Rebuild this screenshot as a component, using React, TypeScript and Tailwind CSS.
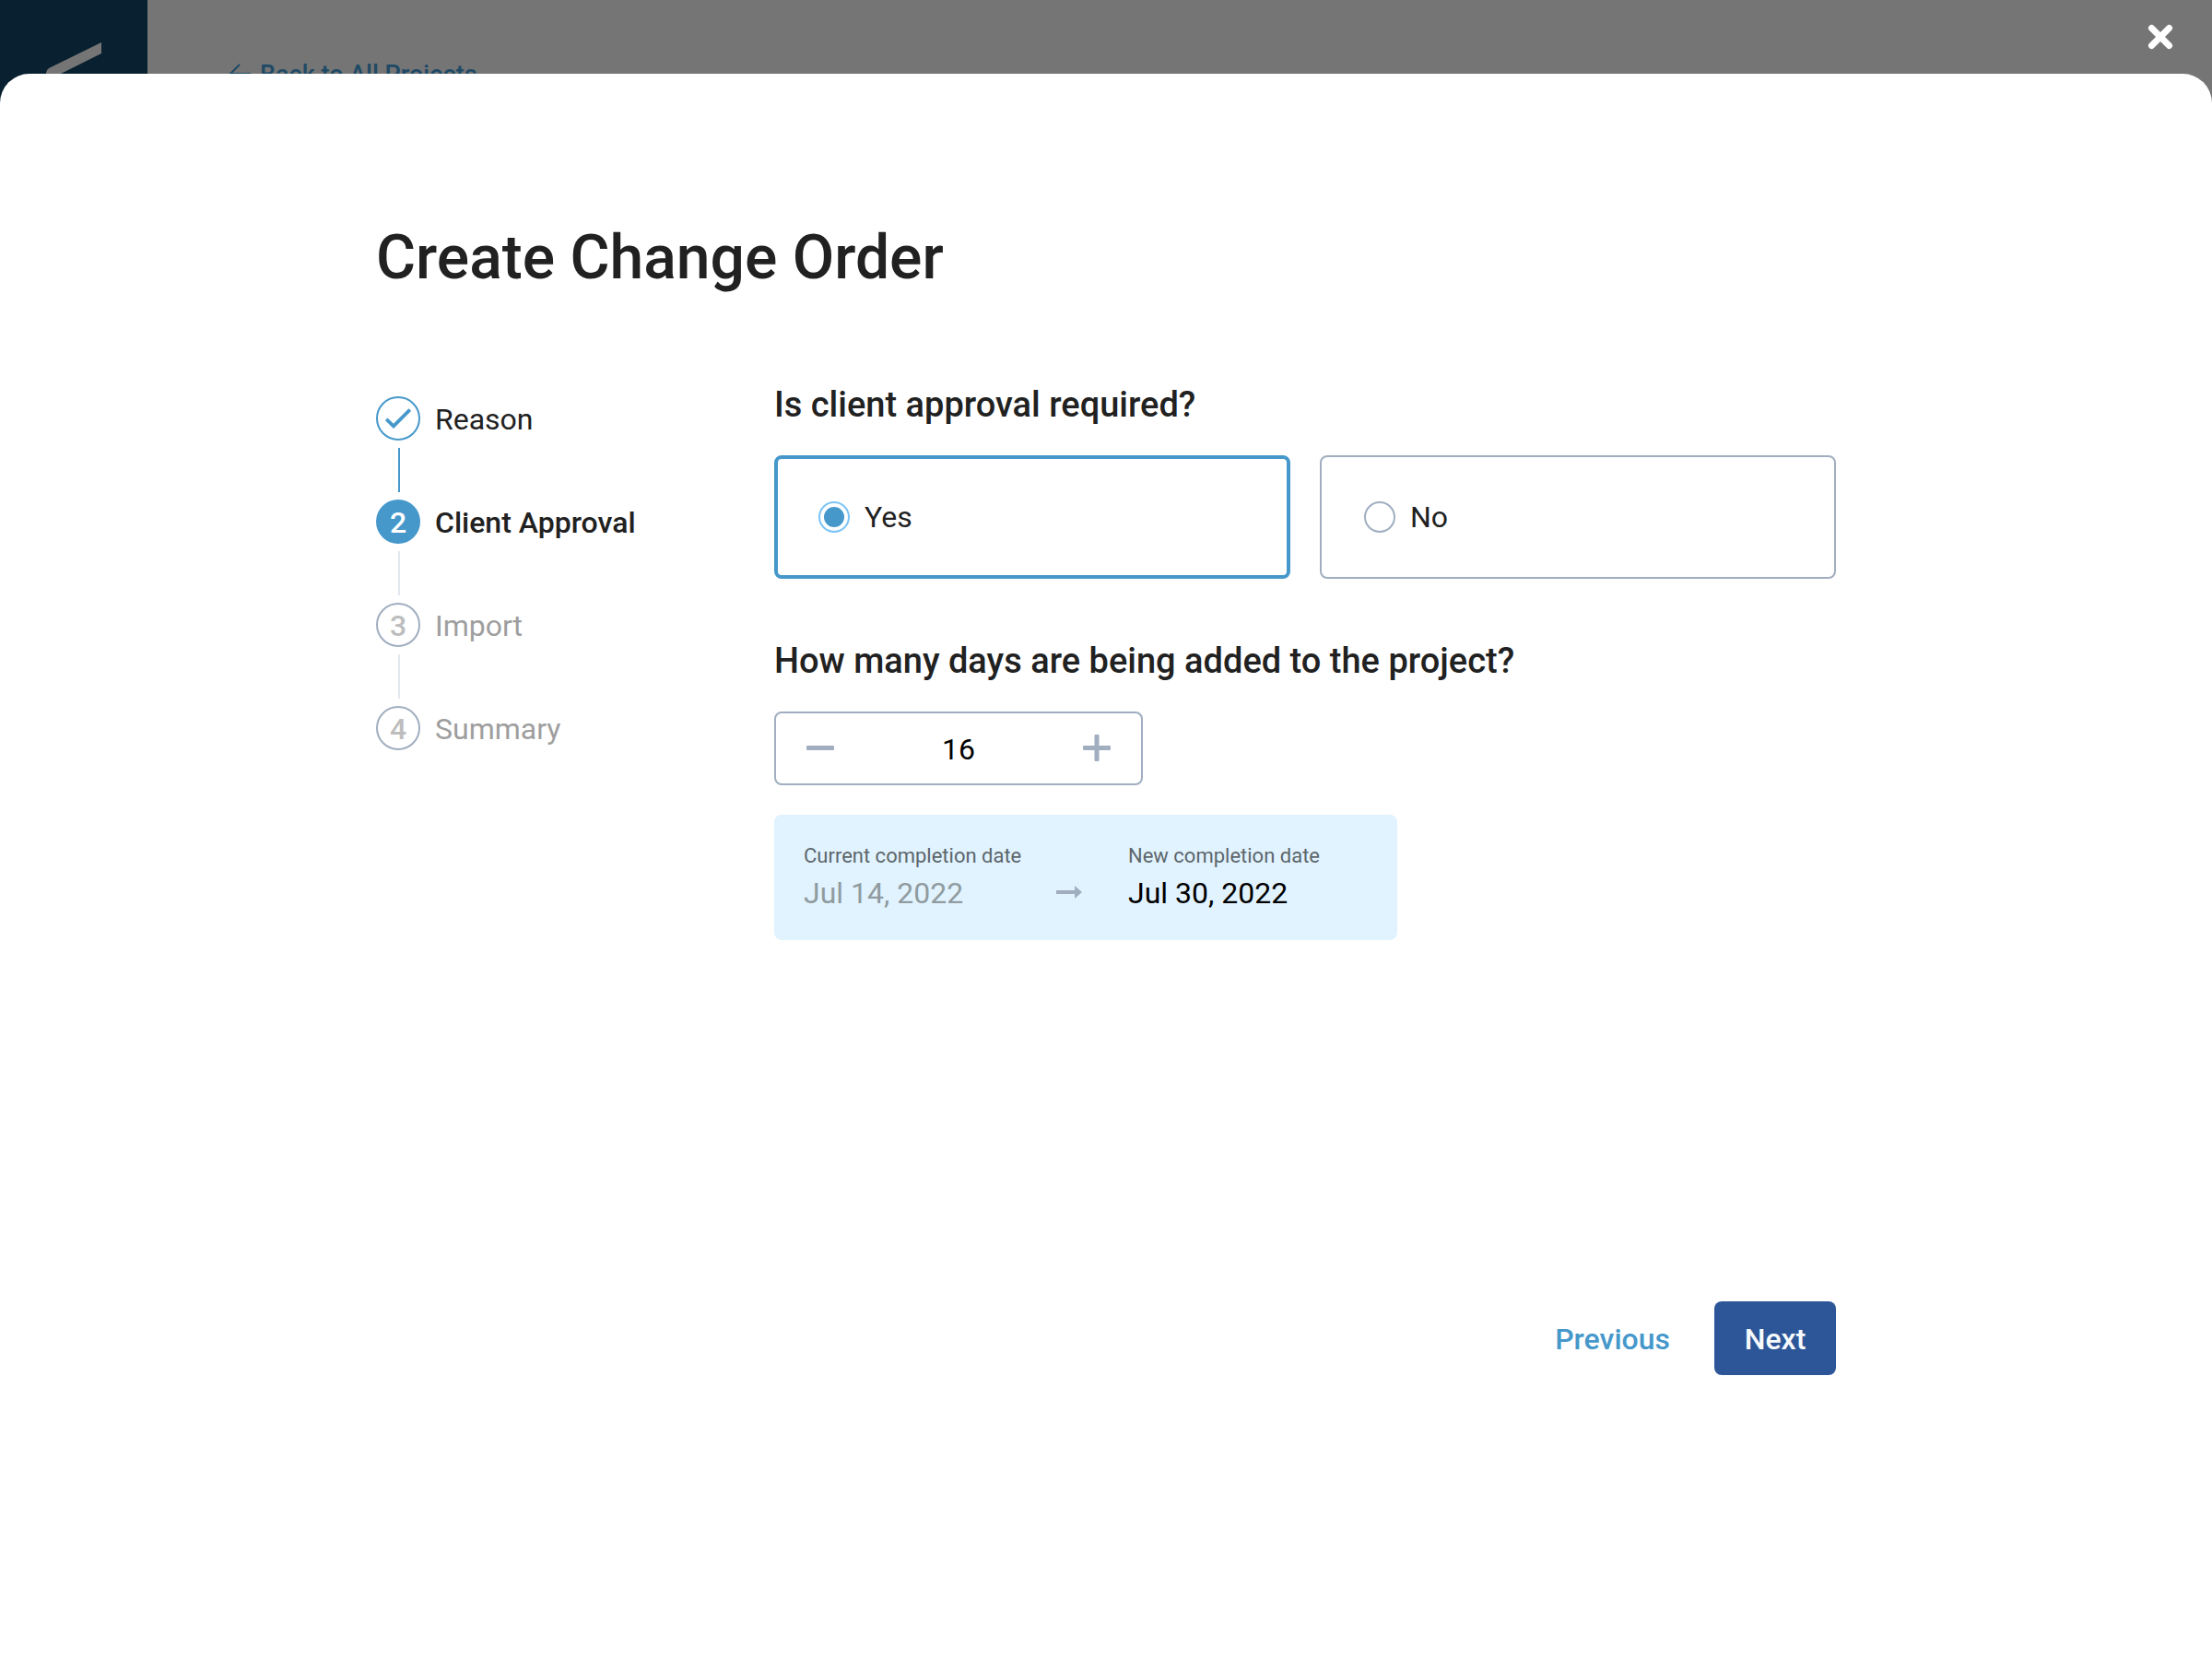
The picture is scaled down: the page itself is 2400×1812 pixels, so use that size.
import { useState } from "react";

const steps = ["Reason", "Client Approval", "Import", "Summary"];
const current = 1;

function CheckIcon() {
  return (
    <svg viewBox="0 0 28 22" className="h-[22px] w-7" fill="none" aria-hidden="true">
      <path d="M1.2 11.8 9 19.4 26.8 1.6" stroke="currentColor" strokeWidth="3.8" />
    </svg>
  );
}

function StepMarker({ index }: { index: number }) {
  if (index < current) {
    return (
      <span className="flex size-12 items-center justify-center rounded-full border-2 border-[#4698cb] text-[#4698cb]">
        <CheckIcon />
      </span>
    );
  }
  if (index === current) {
    return (
      <span className="flex size-12 items-center justify-center rounded-full bg-[#4698cb] pt-0.5 font-medium text-white">
        {index + 1}
      </span>
    );
  }
  return (
    <span className="flex size-12 items-center justify-center rounded-full border-2 border-[#a0aec0] pt-0.5 font-medium text-[#bdbdbd]">
      {index + 1}
    </span>
  );
}

function Stepper() {
  return (
    <ol className="w-[432px] shrink-0 pt-[14px]">
      {steps.map((label, i) => (
        <li key={label}>
          <div className="flex h-12 items-center gap-4">
            <StepMarker index={i} />
            <span
              className={
                i === current
                  ? "pt-0.5 font-medium text-[#212121]"
                  : i < current
                    ? "pt-0.5 text-[#212121]"
                    : "pt-0.5 text-[#9e9e9e]"
              }
            >
              {label}
            </span>
          </div>
          {i < steps.length - 1 && (
            <div
              className={
                i < current
                  ? "my-2 ml-6 h-12 w-0.5 bg-[#4698cb]"
                  : "my-2 ml-6 h-12 w-0.5 bg-[#e2e8f0]"
              }
            />
          )}
        </li>
      ))}
    </ol>
  );
}

function Choice({
  label,
  checked,
  onSelect,
}: {
  label: string;
  checked: boolean;
  onSelect: () => void;
}) {
  return (
    <label
      className={
        checked
          ? "flex h-[134px] flex-1 items-center gap-4 rounded-lg border-4 border-[#4698cb] px-11"
          : "flex h-[134px] flex-1 items-center gap-4 rounded-lg border-2 border-[#a0aec0] px-[46px]"
      }
    >
      <input
        type="radio"
        name="approval"
        checked={checked}
        onChange={onSelect}
        className="grid size-[34px] appearance-none place-items-center rounded-full border-2 border-[#a0aec0] checked:border-[#7cc4f5] checked:before:block checked:before:size-[22px] checked:before:rounded-full checked:before:bg-[#4698cb]"
      />
      <span>{label}</span>
    </label>
  );
}

export default function App() {
  const [approval, setApproval] = useState("Yes");
  const [days, setDays] = useState(16);
  const newDate = new Date(2022, 6, 14 + days).toLocaleDateString("en-US", {
    month: "short",
    day: "numeric",
    year: "numeric",
  });

  return (
    <div className="relative min-h-screen bg-[#757575] font-['Roboto',sans-serif] text-[32px] leading-10 text-[#212121]">
      <div className="absolute inset-0 flex overflow-hidden">
        <aside className="w-40 bg-[#08202f]">
          <svg viewBox="0 0 160 120" className="h-[120px] w-40" aria-hidden="true">
            <path d="M110 46 L53 74 Q50 76 50 79 L50 88 L110 58 Z" fill="#757575" />
          </svg>
        </aside>
        <main className="px-[88px] pt-[65px]">
          <a href="#projects" className="flex items-center gap-2 text-[27px] leading-8 font-medium text-[#1f4a66]">
            <svg viewBox="0 0 26 24" className="h-6 w-[26px]" fill="none" aria-hidden="true">
              <path d="M12 1 2 11 12 21 M2 11 H24" stroke="currentColor" strokeWidth="2" />
            </svg>
            Back to All Projects
          </a>
        </main>
      </div>

      <div className="relative flex min-h-screen flex-col">
        <div className="flex h-20 items-center justify-end px-[42px]">
          <button type="button" aria-label="Close" className="text-white">
            <svg viewBox="0 0 28 28" className="size-7" fill="none" aria-hidden="true">
              <path d="M4.5 4.5 23.5 23.5 M23.5 4.5 4.5 23.5" stroke="currentColor" strokeWidth="7" strokeLinecap="round" />
            </svg>
          </button>
        </div>

        <section
          role="dialog"
          aria-labelledby="title"
          className="flex flex-1 flex-col rounded-t-[32px] bg-white px-12 pt-40 pb-80"
        >
          <div className="mx-auto flex w-full max-w-[1584px] flex-1 flex-col">
            <h1 id="title" className="text-[66px] leading-[80px] font-medium">
              Create Change Order
            </h1>

            <div className="mt-24 flex">
              <Stepper />

              <form className="flex flex-1 flex-col items-start">
                <fieldset className="w-full">
                  <legend className="text-[38px] leading-[46px] font-medium">
                    Is client approval required?
                  </legend>
                  <div className="mt-8 flex gap-8">
                    {["Yes", "No"].map((label) => (
                      <Choice
                        key={label}
                        label={label}
                        checked={approval === label}
                        onSelect={() => setApproval(label)}
                      />
                    ))}
                  </div>
                </fieldset>

                <label htmlFor="days" className="mt-[66px] text-[38px] leading-[46px] font-medium">
                  How many days are being added to the project?
                </label>
                <div className="mt-8 flex h-20 w-[400px] items-center justify-between rounded-lg border-2 border-[#a0aec0] px-8 text-[#a0aec0]">
                  <button type="button" aria-label="Remove a day" onClick={() => setDays(days - 1)}>
                    <svg viewBox="0 0 32 32" className="size-8" aria-hidden="true">
                      <rect x="1" y="13" width="30" height="5" rx="1" fill="currentColor" />
                    </svg>
                  </button>
                  <input
                    id="days"
                    inputMode="numeric"
                    value={days}
                    onChange={(e) => setDays(Number(e.target.value) || 0)}
                    className="w-40 pt-0.5 text-center text-black outline-none"
                  />
                  <button type="button" aria-label="Add a day" onClick={() => setDays(days + 1)}>
                    <svg viewBox="0 0 32 32" className="size-8" aria-hidden="true">
                      <rect x="1" y="13" width="30" height="5" rx="1" fill="currentColor" />
                      <rect x="13.5" y="1" width="5" height="29" rx="1" fill="currentColor" />
                    </svg>
                  </button>
                </div>

                <dl className="mt-8 flex h-[136px] w-[676px] rounded-lg bg-[#e1f3ff] px-8 pt-[29px]">
                  <div className="w-[272px]">
                    <dt className="text-[22px] leading-8 text-[#5c666b]">Current completion date</dt>
                    <dd className="mt-1 text-[#909ba0]">Jul 14, 2022</dd>
                  </div>
                  <svg viewBox="0 0 32 16" className="mt-[47px] h-4 w-8 text-[#a0aec0]" aria-hidden="true">
                    <path d="M2 6 H22 V1 L30 8 L22 15 V10 H2 Z" fill="currentColor" />
                  </svg>
                  <div className="ml-12">
                    <dt className="text-[22px] leading-8 text-[#5c666b]">New completion date</dt>
                    <dd className="mt-1 text-black">{newDate}</dd>
                  </div>
                </dl>
              </form>
            </div>

            <div className="mt-auto flex justify-end gap-4 font-medium">
              <button type="button" className="h-20 rounded-lg px-8 pt-0.5 text-[#4698cb]">
                Previous
              </button>
              <button type="button" className="h-20 min-w-[132px] rounded-lg bg-[#2d5699] px-8 pt-0.5 text-[#f7fafc]">
                Next
              </button>
            </div>
          </div>
        </section>
      </div>
    </div>
  );
}
